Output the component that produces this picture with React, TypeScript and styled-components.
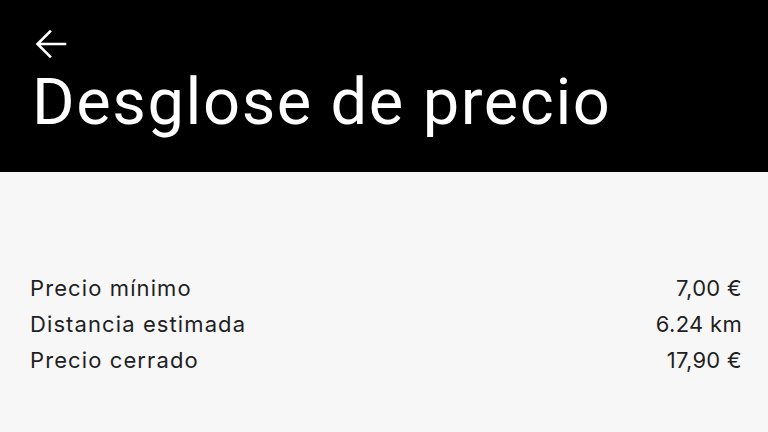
import styled, { createGlobalStyle } from "styled-components";

const Global = createGlobalStyle`
  html, body {
    margin: 0;
    padding: 0;
    background: #f7f7f7;
  }
  body {
    font-family: Inter, "Noto Sans", sans-serif;
    -webkit-font-smoothing: antialiased;
  }
`;

interface LineItem {
  label: string;
  value: string;
}

const items: LineItem[] = [
  { label: "Precio mínimo", value: "7,00 €" },
  { label: "Distancia estimada", value: "6.24 km" },
  { label: "Precio cerrado", value: "17,90 €" },
];

export default function App() {
  return (
    <>
      <Global />
      <Page>
        <Header>
          <BackButton aria-label="Atrás">
            <svg width="32" height="30" viewBox="0 0 32 30" fill="none">
              <path
                d="M30 15H3M15 2.5L2.5 15L15 27.5"
                stroke="#fff"
                strokeWidth="2.6"
                strokeLinecap="square"
              />
            </svg>
          </BackButton>
          <Title>Desglose de precio</Title>
        </Header>
        <Breakdown>
          {items.map((item) => (
            <Row key={item.label}>
              <Label>{item.label}</Label>
              <Value>{item.value}</Value>
            </Row>
          ))}
        </Breakdown>
      </Page>
    </>
  );
}

const Page = styled.div`
  width: 768px;
  height: 432px;
  display: flex;
  flex-direction: column;
  overflow: hidden;
  background: #f7f7f7;
`;

const Header = styled.header`
  height: 172px;
  box-sizing: border-box;
  background: #000;
  color: #fff;
  padding: 29px 0 0 35px;
  display: flex;
  flex-direction: column;
`;

const BackButton = styled.button`
  width: 32px;
  height: 30px;
  padding: 0;
  border: none;
  background: none;
  display: flex;
`;

const Title = styled.h1`
  margin: 3px 0 0 -3px;
  font-family: Roboto, "Noto Sans", sans-serif;
  font-size: 65px;
  font-weight: 400;
  line-height: 80px;
  letter-spacing: 1.6px;
`;

const Breakdown = styled.div`
  padding: 98px 26px 0 30px;
  display: flex;
  flex-direction: column;
`;

const Row = styled.div`
  display: flex;
  justify-content: space-between;
  align-items: baseline;
  height: 36px;
  font-size: 22px;
  line-height: 36px;
  color: #1f1f1f;
`;

const Label = styled.span`
  letter-spacing: 1.1px;
`;

const Value = styled.span`
  letter-spacing: 0.3px;
`;
